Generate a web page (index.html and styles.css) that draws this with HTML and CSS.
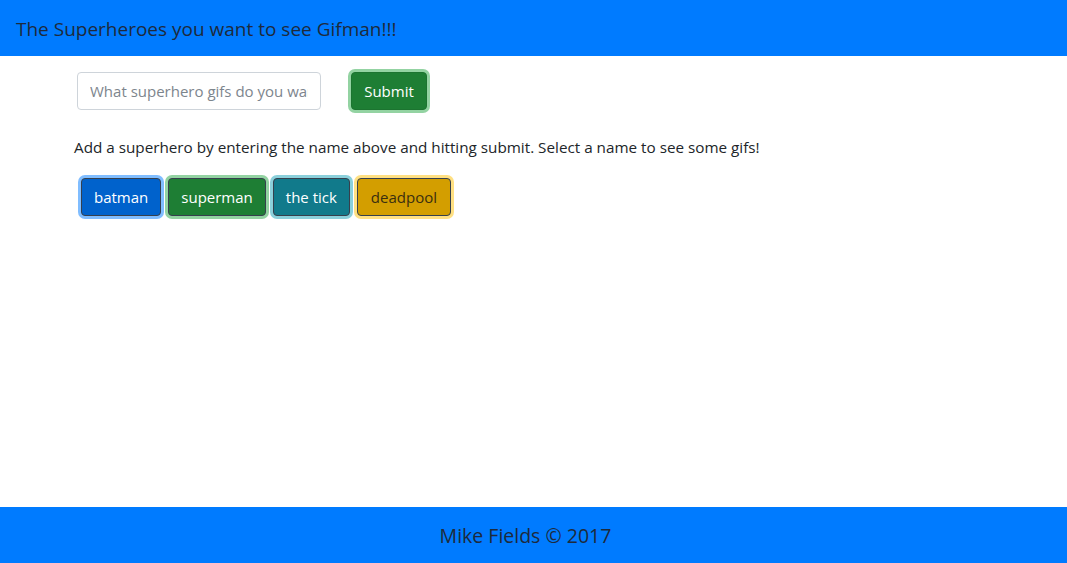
FILE: index.html
```html
<!DOCTYPE html>
<html lang="en">
<head>
<meta charset="utf-8">
<title>Gifman</title>
<link rel="stylesheet" href="styles.css">
</head>
<body>
<div class="page">
  <header class="topbar">
    <span class="brand">The Superheroes you want to see Gifman!!!</span>
  </header>
  <main class="content">
    <form class="search">
      <input class="field" type="text" placeholder="What superhero gifs do you want to see?">
      <button class="btn btn-submit" type="button">Submit</button>
    </form>
    <p class="hint">Add a superhero by entering the name above and hitting submit. Select a name to see some gifs!</p>
    <div class="heroes">
      <button class="btn hero hero-blue" type="button">batman</button>
      <button class="btn hero hero-green" type="button">superman</button>
      <button class="btn hero hero-teal" type="button">the tick</button>
      <button class="btn hero hero-yellow" type="button">deadpool</button>
    </div>
  </main>
  <footer class="bottombar">
    <span class="credit">Mike Fields © 2017</span>
  </footer>
</div>
</body>
</html>
```

FILE: styles.css
```css
* { box-sizing: border-box; }
html, body { margin: 0; padding: 0; height: 100%; }
body {
  font-family: "Open Sans", "Noto Sans", sans-serif;
  font-size: 15px;
  color: #212529;
  background: #fff;
}
.page {
  min-height: 100%;
  display: flex;
  flex-direction: column;
}
.topbar {
  height: 56px;
  background: #007bff;
  display: flex;
  align-items: center;
  padding: 0 16px;
}
.brand {
  font-size: 19px;
  color: #1e2a3b;
  position: relative;
  top: 1px;
}
.content {
  flex: 1;
  padding: 16px 0 0 74px;
}
.search {
  display: flex;
  align-items: center;
  gap: 30px;
  margin: 0 0 0 3px;
}
.field {
  width: 244px;
  height: 38px;
  padding: 6px 12px;
  border: 1px solid #ced4da;
  border-radius: 4px;
  font-family: inherit;
  font-size: 15px;
  color: #495057;
  outline: none;
}
.field::placeholder { color: #7d858d; }
.btn {
  height: 38px;
  padding: 0 12px;
  border-radius: 4px;
  font-family: inherit;
  font-size: 15px;
  line-height: 1;
  cursor: pointer;
}
.btn-submit {
  width: 76px;
  padding: 0;
  background: #1e7e34;
  color: #fff;
  border: 1px solid #1c7430;
  box-shadow: 0 0 0 3px #93d3a2;
}
.hint {
  margin: 25px 0 0 0;
  line-height: 24px;
  font-size: 15.25px;
}
.heroes {
  display: flex;
  gap: 7px;
  margin: 19px 0 0 7px;
}
.hero {
  border: 1px solid #36404d;
  color: #fff;
}
.hero-blue { background: #0062cc; box-shadow: 0 0 0 3px #80bdff; }
.hero-green { background: #1e7e34; box-shadow: 0 0 0 3px #93d3a2; }
.hero-teal { background: #117a8b; box-shadow: 0 0 0 3px #8bd0db; }
.hero-yellow { background: #d39e00; color: #3a2f10; box-shadow: 0 0 0 3px #ffe083; padding: 0 13px; }
.bottombar {
  height: 56px;
  background: #007bff;
  display: flex;
  align-items: center;
  justify-content: center;
  padding-right: 16px;
}
.credit {
  font-size: 19.5px;
  color: #1e2a3b;
}
```
